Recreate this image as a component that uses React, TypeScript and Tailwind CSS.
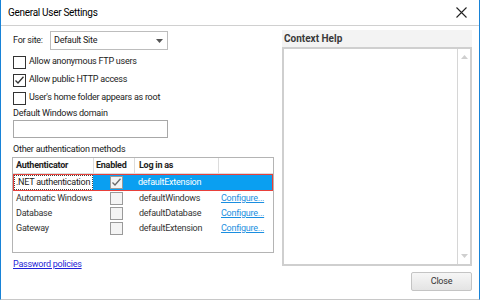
import React from "react";

const font = { fontFamily: 'Roboto, "Liberation Sans", Arial, sans-serif' };

function Check({ checked, gray }: { checked?: boolean; gray?: boolean }) {
  return (
    <div
      className={
        "w-[13px] h-[13px] shrink-0 flex items-center justify-center border " +
        (gray ? "border-[#9a9a9a] bg-[#f4f4f4]" : "border-[#333333] bg-white")
      }
    >
      {checked && (
        <svg width="11" height="11" viewBox="0 0 11 11">
          <path d="M1.5 5.5 L4 8 L9.5 1.8" fill="none" stroke={gray ? "#6a6a6a" : "#333"} strokeWidth="1.3" />
        </svg>
      )}
    </div>
  );
}

function CheckRow({ label, checked }: { label: string; checked?: boolean }) {
  return (
    <div className="h-[18px] flex items-center gap-[3px]">
      <Check checked={checked} />
      <span>{label}</span>
    </div>
  );
}

const rows = [
  { a: "Automatic Windows", l: "defaultWindows" },
  { a: "Database", l: "defaultDatabase" },
  { a: "Gateway", l: "defaultExtension" },
];

export default function App() {
  return (
    <div
      className="w-[480px] h-[300px] bg-white border-l border-r border-b border-l-[#1883d7] border-r-[#1883d7] border-b-[#c8c8c8] flex flex-col text-[9px] tracking-[-0.25px] text-[#1a1a1a] overflow-hidden whitespace-nowrap"
      style={font}
    >
      <div className="h-[26px] shrink-0 flex items-center justify-between pl-[7px] pr-[12px] border-b border-[#d0d0d0]">
        <span className="text-[10px] tracking-[-0.3px] text-black">General User Settings</span>
        <svg width="11" height="11" viewBox="0 0 11 11">
          <path d="M0.5 0.5 L10.5 10.5 M10.5 0.5 L0.5 10.5" stroke="#222" strokeWidth="1.1" />
        </svg>
      </div>
      <div className="flex flex-1">
        <div className="w-[272px] shrink-0 pl-[11px] pt-[5px] flex flex-col">
          <div className="h-[19px] flex items-center pl-[1px]">
            <span className="w-[37px]">For site:</span>
            <div className="w-[118px] h-[19px] border border-[#bdbdbd] flex items-center justify-between pl-[3px] pr-[4px]">
              <span>Default Site</span>
              <svg width="7" height="4" viewBox="0 0 7 4">
                <path d="M0 0 L7 0 L3.5 4 Z" fill="#555" />
              </svg>
            </div>
          </div>
          <div className="pl-[1px] flex flex-col mt-[3px]">
            <CheckRow label="Allow anonymous FTP users" />
            <CheckRow label="Allow public HTTP access" checked />
            <CheckRow label="User's home folder appears as root" />
            <div className="h-[12px] flex items-center mt-[1px]">Default Windows domain</div>
            <div className="w-[155px] h-[18px] border border-[#a8a8a8] bg-white mt-[0px]" />
            <div className="h-[14px] flex items-center mt-[5px]">Other authentication methods</div>
          </div>
          <div className="w-[262px] h-[96px] border border-[#b4b4b4] bg-white flex flex-col">
            <div className="h-[16px] flex border-b border-[#dcdcdc] font-bold text-[#222]">
              <div className="w-[81px] pl-[3px] flex items-center border-r border-[#dcdcdc]">Authenticator</div>
              <div className="w-[41px] pl-[2px] flex items-center border-r border-[#dcdcdc]">Enabled</div>
              <div className="w-[84px] pl-[4px] flex items-center border-r border-[#dcdcdc]">Log in as</div>
              <div className="flex-1" />
            </div>
            <div className="h-[17px] flex border-[1.5px] border-[#e8403a] bg-[#0a9ff1] text-white">
              <div className="w-[79px] bg-white text-[#1a1a1a] border border-dotted border-[#444] flex items-center pl-[1px] overflow-hidden">
                .NET authentication
              </div>
              <div className="w-[41px] flex items-center justify-center pl-[5px]">
                <Check checked gray />
              </div>
              <div className="w-[84px] pl-[4px] flex items-center">defaultExtension</div>
            </div>
            {rows.map((r) => (
              <div key={r.a} className="h-[15px] flex">
                <div className="w-[81px] pl-[3px] flex items-center text-[#333]">{r.a}</div>
                <div className="w-[41px] flex items-center justify-center pl-[4px]">
                  <Check gray />
                </div>
                <div className="w-[84px] pl-[4px] flex items-center text-[#333]">{r.l}</div>
                <div className="flex-1 pl-[2px] flex items-center text-[#1a8ee0] underline">Configure...</div>
              </div>
            ))}
          </div>
          <div className="mt-[5px] pl-[1px] text-[#1f1fd8] underline">Password policies</div>
        </div>
        <div className="ml-[9px] w-[190px] pt-[4px] flex flex-col">
          <div className="h-[17px] bg-[#f3f3f3] flex items-center pl-[2px] font-bold text-[10px] tracking-normal text-[#3a3a3a]">
            Context Help
          </div>
          <div className="h-[219px] border-2 border-[#cfcfcf] bg-white flex justify-end">
            <div className="w-[13px] border-l border-[#d6d6d6] flex flex-col items-center justify-between py-[6px]">
              <svg width="7" height="4" viewBox="0 0 7 4">
                <path d="M0 4 L7 4 L3.5 0 Z" fill="#cfcfcf" />
              </svg>
              <svg width="7" height="4" viewBox="0 0 7 4">
                <path d="M0 0 L7 0 L3.5 4 Z" fill="#cfcfcf" />
              </svg>
            </div>
          </div>
          <div className="flex justify-end mt-[6px]">
            <div className="w-[61px] h-[19px] border border-[#c4c4c4] rounded-[2px] bg-gradient-to-b from-[#f6f6f6] to-[#e4e4e4] flex items-center justify-center text-[#333]">
              Close
            </div>
          </div>
        </div>
      </div>
    </div>
  );
}
